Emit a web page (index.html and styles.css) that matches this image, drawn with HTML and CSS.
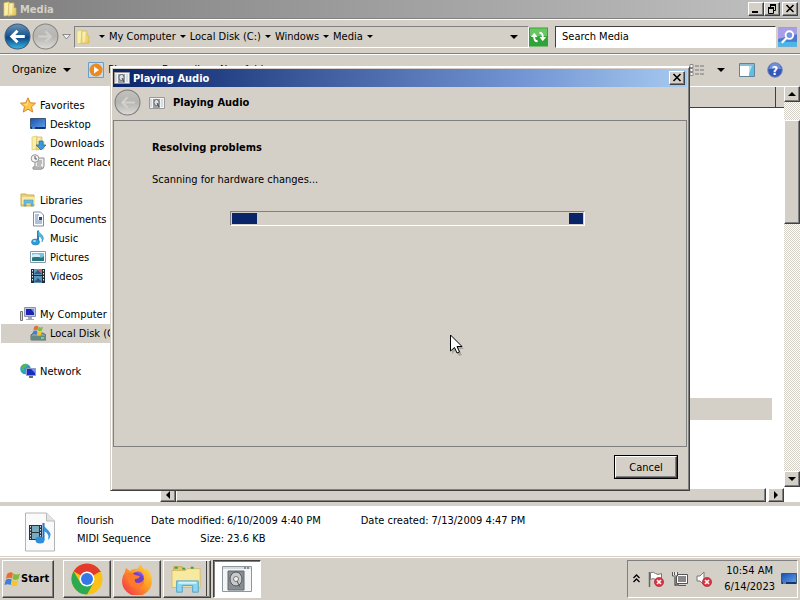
FILE: index.html
```html
<!DOCTYPE html>
<html lang="en">
<head>
<meta charset="utf-8">
<title>Media</title>
<link rel="stylesheet" href="styles.css">
</head>
<body>
<svg class="defs" aria-hidden="true">
  <defs>
    <linearGradient id="blueBall" x1="0" y1="0" x2="0" y2="1"><stop offset="0" stop-color="#6d93b5"/><stop offset=".45" stop-color="#1c5a92"/><stop offset=".55" stop-color="#0e4683"/><stop offset="1" stop-color="#35b8ea"/></linearGradient>
    <linearGradient id="greyBall" x1="0" y1="0" x2="0" y2="1"><stop offset="0" stop-color="#c2c1be"/><stop offset=".5" stop-color="#b5b4b0"/><stop offset="1" stop-color="#dddcd8"/></linearGradient>
    <linearGradient id="gold" x1="0" y1="0" x2="1" y2="1"><stop offset="0" stop-color="#fbf3b4"/><stop offset="1" stop-color="#e3c557"/></linearGradient>
    <linearGradient id="screen" x1="0" y1="0" x2="1" y2="1"><stop offset="0" stop-color="#1b4fb0"/><stop offset="1" stop-color="#62a4ec"/></linearGradient>
    <linearGradient id="fox" x1="1" y1="0" x2="0" y2="1"><stop offset="0" stop-color="#ffe14a"/><stop offset=".45" stop-color="#ff9a25"/><stop offset="1" stop-color="#f0264e"/></linearGradient>
    <symbol id="folder" viewBox="0 0 16 16"><path d="M2 2l5-1v13l-5 1z" fill="#f8efac" stroke="#dfc766" stroke-width=".7"/><path d="M7 2h5v5h2v7l-8 1z" fill="url(#gold)" stroke="#d5b752" stroke-width=".7"/><path d="M9 3v10" stroke="#fff8cf"/></symbol>
    <symbol id="speakerbox" viewBox="0 0 16 14"><path d="M.5 1.500h15v11H.5z" fill="#f4f4f4" stroke="#999"/><path d="M4 3h7v9H4z" fill="#9ba1a8"/><ellipse cx="7.500" cy="6.500" rx="2.500" ry="3" fill="#dfe3e7" stroke="#555" stroke-width=".8"/><path d="M8 7l2 4" stroke="#444"/><path d="M2 3v8M13 3v8" stroke="#b7c2d0"/></symbol>
    <symbol id="badge" viewBox="0 0 10 10"><circle cx="5" cy="5" r="4.600" fill="#d8333e" stroke="#a91f2b" stroke-width=".6"/><path d="M3 3l4 4M7 3L3 7" stroke="#fff" stroke-width="1.600"/></symbol>
    <symbol id="flag4" viewBox="0 0 16 16"><path d="M3 3q3-3 6-1L8 7.500Q5 6 2 8z" fill="#ef6a2e"/><path d="M9.500 2.500q3 2 6.500 0l-1.500 5.500q-3 2-6 0z" fill="#7ebc3c"/><path d="M1.700 9q3-2 6-.5l-1 5.500Q4 12.500.5 14z" fill="#3c80d8"/><path d="M8.300 9q3 2 6 0L13 14.500q-3 1.500-6 0z" fill="#f6c52d"/></symbol>
    <symbol id="monitor" viewBox="0 0 16 16"><path d="M.5 2.500h15v10H.5z" fill="url(#screen)" stroke="#385777"/><path d="M1 11h14v2H1z" fill="#163568"/><path d="M2 12h3" stroke="#8fd0ff"/></symbol>
    <symbol id="pc" viewBox="0 0 16 16"><path d="M.5 5.500h2v9h-2z" fill="#d9d9d9" stroke="#777"/><path d="M4.500 1.500h11v9h-11z" fill="#bfc8e4" stroke="#8b94ad"/><path d="M6 3h8v6H6z" fill="#1c22b4"/><path d="M11 3h3v4z" fill="#6d8bf1"/><path d="M8 11h4v2h2v1H6v-1h2z" fill="#a4a9b4"/></symbol>
  </defs>
</svg>

<main class="window">
  <header class="titlebar">
    <svg class="i16"><use href="#folder"/></svg>
    <h1>Media</h1>
    <div class="caption-buttons">
      <button class="bevel cap" aria-label="Minimize"><svg viewBox="0 0 12 10"><path d="M2 8h6" stroke="#000" stroke-width="2"/></svg></button>
      <button class="bevel cap" aria-label="Restore"><svg viewBox="0 0 12 10"><path d="M4 1h6M2 4h6" stroke="#000" stroke-width="2"/><path d="M4.500 1v2M9.500 1v5.500H8M2.500 4v5.500h5V4" fill="none" stroke="#000"/></svg></button>
      <button class="bevel cap close" aria-label="Close"><svg viewBox="0 0 12 10"><path d="M2.500 1l7 7M9.500 1l-7 7" stroke="#000" stroke-width="1.600"/></svg></button>
    </div>
  </header>

  <nav class="navbar" aria-label="Address">
    <button class="plain" aria-label="Back"><svg class="ball" viewBox="0 0 26 26"><circle cx="13" cy="13" r="12" fill="url(#blueBall)" stroke="#3c5c7c"/><path d="M20 13H8M13 7.500L7.500 13l5.500 5.500" fill="none" stroke="#fff" stroke-width="2.800"/></svg></button>
    <button class="plain" aria-label="Forward"><svg class="ball" viewBox="0 0 26 26"><circle cx="13" cy="13" r="12" fill="url(#greyBall)" stroke="#858582"/><path d="M6 13h12M13 8l5 5-5 5" fill="none" stroke="#cecdca" stroke-width="2.400"/></svg></button>
    <button class="plain recent" aria-label="Recent pages"><svg viewBox="0 0 9 6"><path d="M.7.5h7.600L4.500 5z" fill="#eee" stroke="#777" stroke-width=".8"/></svg></button>
    <div class="address">
      <svg class="i16"><use href="#folder"/></svg>
      <i class="down"></i><a href="#">My Computer</a>
      <i class="down"></i><a href="#">Local Disk (C:)</a>
      <i class="down"></i><a href="#">Windows</a>
      <i class="down"></i><a href="#">Media</a><i class="down"></i>
      <i class="down big last"></i>
    </div>
    <button class="plain refresh" aria-label="Refresh"><svg viewBox="0 0 20 20"><path d="M0 0h20v20H0z" fill="#2fa436"/><path d="M1 1h18v8H1z" fill="#69c662"/><path d="M9 14.500Q5.500 14.500 5.500 10M11 5.500q3.500 0 3.500 4.500" fill="none" stroke="#fff" stroke-width="2"/><path d="M2 10l3.500-4.500L9 10zM11 10l3.500 4.500L18 10z" fill="#fff"/></svg></button>
    <input class="search" type="text" aria-label="Search Media" value="Search Media">
    <button class="plain go" aria-label="Search"><svg viewBox="0 0 20 20"><path d="M0 0h20v20H0z" fill="#4a76d6"/><path d="M0 0h20v7L0 12z" fill="#a79ee6"/><path d="M0 15h20v5H0z" fill="#46b9e6"/><circle cx="12" cy="8" r="4" fill="#7593e4" stroke="#fff" stroke-width="2"/><path d="M9 11l-5 5" stroke="#fff" stroke-width="2.400"/></svg></button>
  </nav>

  <div class="toolbar">
    <button class="plain organize">Organize <i class="down big"></i></button>
    <button class="plain play"><svg class="i16" viewBox="0 0 16 16"><path d="M.5.5h15v15H.5z" fill="#bfdcf2" stroke="#6b9fc8"/><circle cx="8" cy="8" r="6.500" fill="#ee8a1d"/><path d="M6 4.500l5 3.500-5 3.500z" fill="#fff"/></svg>Play</button>
    <button class="plain">Burn all</button>
    <button class="plain">New folder</button>
    <div class="views">
      <button class="plain" aria-label="Change view"><svg class="v" viewBox="0 0 16 14"><path d="M1 1.500h3v3H1zM1 5.500h3v3H1zM1 9.500h3v3H1z" fill="#fff" stroke="#888"/><path d="M6 3h4M11 3h4M6 7h4M11 7h4M6 11h4M11 11h4" stroke="#777"/></svg></button>
      <button class="plain" aria-label="More view options"><i class="down big"></i></button>
      <button class="plain" aria-label="Preview pane"><svg class="i16" viewBox="0 0 16 14"><path d="M.5.5h15v13H.5z" fill="#fff" stroke="#60839b"/><path d="M1 1h14v2H1z" fill="#8dbbd1"/><path d="M10 3h5v10h-5z" fill="#62bdde"/><path d="M10 3l3 0-3 8z" fill="#b2e3f2"/></svg></button>
      <button class="plain" aria-label="Help"><svg class="i16" viewBox="0 0 16 16"><circle cx="8" cy="8" r="7.300" fill="#3157bd" stroke="#7b8cb8"/><path d="M2 7a6 6 0 0112 0z" fill="#718fd9"/><text x="8" y="12.500" text-anchor="middle" class="qm">?</text></svg></button>
    </div>
  </div>

  <section class="content">
    <aside class="sidebar">
      <ul>
        <li><svg class="i16" viewBox="0 0 16 16"><path d="M8 .8l2.200 5 5.300.4-4 3.500 1.200 5.300L8 12.200 3.300 15l1.200-5.300-4-3.500 5.300-.4z" fill="#fbc94a" stroke="#dd8326"/><path d="M8 3v4l-4 .5 3 1z" fill="#fff0a5"/></svg>Favorites
          <ul>
            <li><svg class="i16"><use href="#monitor"/></svg>Desktop</li>
            <li><svg class="i16" viewBox="0 0 16 16"><use href="#folder"/><path d="M9 6h4v4h3l-5 5-5-5h3z" fill="#3c98e0" stroke="#1b67ac" stroke-width=".7"/></svg>Downloads</li>
            <li><svg class="i16" viewBox="0 0 16 16"><path d="M5 4h9v8q0 3-3 3H3q2-1 2-4z" fill="#eee" stroke="#8c8c8c"/><path d="M7 7h5M7 9h5M7 11h4" stroke="#888"/><path d="M3 13h9v2H3z" fill="#c8c8c8" stroke="#999"/><circle cx="5" cy="4.500" r="3.800" fill="#f5f5f5" stroke="#8e969c"/><path d="M5 2v3h2" fill="none" stroke="#555"/></svg>Recent Places</li>
          </ul>
        </li>
        <li><svg class="i16" viewBox="0 0 16 16"><path d="M1 2h5l1 1h7v11H1z" fill="#ead27a" stroke="#cbae50"/><path d="M2 5h13v7H2z" fill="#f7eaa6"/><path d="M4 8h9v6h-2v-3H6v3H4z" fill="#6abbe2" stroke="#4a94b8" stroke-width=".6"/></svg>Libraries
          <ul>
            <li><svg class="i16" viewBox="0 0 16 16"><path d="M3.500 1h7l3 3v11h-10z" fill="#fdfdff" stroke="#7e8ba5"/><path d="M5 4h4M5 6h3M5 8h3M5 10h7M5 12h7" stroke="#6281b5"/><path d="M9 6h3v3H9z" fill="#26477c"/></svg>Documents</li>
            <li><svg class="i16" viewBox="0 0 16 16"><path d="M8 1v11" stroke="#2a7fb7" stroke-width="2"/><path d="M8 0q1 3 4 5 3 3 0 7 1-5-4-6z" fill="#55b7e1" stroke="#2a83b8" stroke-width=".5"/><ellipse cx="5.500" cy="12" rx="4" ry="3" fill="#329bd5" stroke="#1b6ea8" stroke-width=".6"/><ellipse cx="4.500" cy="11" rx="1.500" ry="1" fill="#a5def5"/></svg>Music</li>
            <li><svg class="i16" viewBox="0 0 16 16"><path d="M.5 2.500h15v11H.5z" fill="#fff" stroke="#8399ae"/><path d="M2 4h12v8H2z" fill="#78c2e7"/><path d="M2 9q4-3 7-1t5-1v5H2z" fill="#287779"/><path d="M2 6q4-2 8 0v2L2 8z" fill="#d3eef8"/></svg>Pictures</li>
            <li><svg class="i16" viewBox="0 0 16 16"><path d="M1 1h14v14H1z" fill="#222c35"/><path d="M4 1h8v6H4zM4 8h8v7H4z" fill="#5995bc"/><path d="M4 6l4-4 4 4zM4 14l4-4 4 4z" fill="#36597b"/><path d="M8 2h3v3z" fill="#c26664"/><path d="M2.500 2v12M13.500 2v12" stroke="#e8eef2" stroke-dasharray="1.500 1.500"/></svg>Videos</li>
          </ul>
        </li>
        <li><svg class="i16"><use href="#pc"/></svg>My Computer
          <ul>
            <li class="selected"><svg class="i16" viewBox="0 0 16 16"><path d="M1 10l2-2h10l3 2v5H1z" fill="#8c9ba0" stroke="#596e74"/><path d="M1 11h14v4H1z" fill="#638b83"/><path d="M11 13h3" stroke="#72ef7c" stroke-width="1.500"/><svg x="2" y="0" width="11" height="11"><use href="#flag4"/></svg></svg>Local Disk (C:)</li>
          </ul>
        </li>
        <li><svg class="i16" viewBox="0 0 16 16"><circle cx="5.500" cy="6" r="5.300" fill="#2b9fc6"/><path d="M2 3q2-3 5-2l-1 3-2 1v3L1 7zM5 7l3 2-2 2z" fill="#53b956"/><path d="M6.500 5.500h9v7h-9z" fill="#1b2dbb" stroke="#8f9dcb"/><path d="M11 6h4v4z" fill="#7195ec"/><path d="M9 13h4v2H9z" fill="#667"/></svg>Network</li>
      </ul>
    </aside>
    <div class="files">
      <div class="column-head"><span></span></div>
      <div class="rows"><div class="row-selected"></div></div>
      <div class="hscroll">
        <button class="bevel arrow" aria-label="Scroll left"><i class="tri left"></i></button>
        <div class="bevel hthumb"></div>
        <button class="bevel arrow" aria-label="Scroll right"><i class="tri right"></i></button>
      </div>
    </div>
    <div class="vscroll">
      <button class="bevel arrow" aria-label="Scroll up"><i class="tri up"></i></button>
      <div class="bevel vthumb"></div>
      <button class="bevel arrow" aria-label="Scroll down"><i class="tri dn"></i></button>
    </div>
  </section>

  <section class="details">
    <svg class="file" viewBox="0 0 32 40"><path d="M1.500 1h21l8 8v30h-29z" fill="#fafafa" stroke="#b4b4b4"/><path d="M22.500 1v8h8" fill="#e3e3e3" stroke="#bbb"/><path d="M5 13h13v15H5z" fill="#27323a"/><path d="M8 14h7v6H8zM8 21h7v6H8z" fill="#78aabd"/><path d="M6.500 14v13M16.500 14v13" stroke="#dde" stroke-dasharray="1.500 1.500"/><path d="M19.500 11v17" stroke="#2371ba" stroke-width="2"/><path d="M19 11q1 4 5 7 5 5 0 10 2-6-4-9z" fill="#3894dc"/><ellipse cx="16" cy="28" rx="4.500" ry="3.500" fill="#2f8cd9"/></svg>
    <div class="name"><span>flourish</span><span>MIDI Sequence</span></div>
    <dl class="facts"><dt>Date modified:</dt><dd>6/10/2009 4:40 PM</dd><dt>Size:</dt><dd>23.6 KB</dd></dl>
    <dl class="facts created"><dt>Date created:</dt><dd>7/13/2009 4:47 PM</dd></dl>
  </section>
</main>

<footer class="taskbar">
  <button class="bevel start"><svg viewBox="0 0 16 16"><use href="#flag4"/></svg>Start</button>
  <button class="bevel task" aria-label="Google Chrome"><svg viewBox="0 0 32 32"><circle cx="16" cy="16" r="15.500" fill="#fbc116"/><path d="M16 16L2.600 8.200A15.500 15.500 0 0129.400 8.200z" fill="#e33b2e"/><path d="M2.600 8.200A15.500 15.500 0 0016 31.500L22.500 20 16 23 9.500 20z" fill="#2da94f"/><path d="M16 8.500h13.500" stroke="#e33b2e" stroke-width="1"/><circle cx="16" cy="16" r="7.500" fill="#fff"/><circle cx="16" cy="16" r="6" fill="#3478e8"/></svg></button>
  <button class="bevel task" aria-label="Firefox"><svg viewBox="0 0 32 32"><path d="M4 9l1-4 4 3q3-3 7-2l4-5q1 4 4 6l1-2q6 5 6 13a14.500 14.500 0 01-30 0Q1 13 4 9z" fill="url(#fox)"/><circle cx="16" cy="16" r="7" fill="#7041c5"/><path d="M6 11q4-3 8 1l5 1q-1 3-5 3-1 4 3 4 4 0 6-4 1 8-7 9-10-1-10-14z" fill="#ff7a2c"/><path d="M14 9q7-2 9 5l-3-2q-3-2-6-3z" fill="#9059dd"/></svg></button>
  <button class="bevel task stacked" aria-label="Windows Explorer"><svg viewBox="0 0 34 32"><path d="M3 3h9l2 3h15v19H3z" fill="#e4c866" stroke="#c6a94c"/><path d="M1 7h14l2-2h14v20H1z" fill="#f8e9a0" stroke="#d4bb69"/><path d="M4 4h3M12 5h3M21 4h3" stroke="#3a9a4e" stroke-width="2"/><path d="M6 18h23v12h-6v-7H12v7H6z" fill="#8ed5ef" stroke="#4ba4cd"/><path d="M8 20h19" stroke="#d6f4ff" stroke-width="2"/></svg></button>
  <button class="task pressed" aria-label="Playing Audio"><svg viewBox="0 0 32 28"><path d="M1.500 1.500h29v25h-29z" fill="#f3f5f7" stroke="#8f979e"/><path d="M2 2h28v2H2z" fill="#d4dade"/><path d="M23 3h2M26 3h2" stroke="#444"/><path d="M7 6h16v19H7z" fill="#868d93" stroke="#62686e"/><ellipse cx="15" cy="14" rx="6" ry="7" fill="#c6cacd" stroke="#555"/><circle cx="15" cy="14" r="2.500" fill="#f2f2f2" stroke="#777"/><path d="M16 16l3 6" stroke="#555"/></svg></button>
  <div class="tray">
    <button class="plain" aria-label="Show hidden icons"><svg class="chev" viewBox="0 0 7 9"><path d="M.5 4l3-3 3 3M.5 8l3-3 3 3" fill="none" stroke="#000" stroke-width="1.300"/></svg></button>
    <svg class="i16" viewBox="0 0 16 16"><path d="M1.500 1v15" stroke="#666" stroke-width="1.500"/><path d="M2.500 1.500q3-1 5 1t6 0v6q-4 2-6 0t-5 0z" fill="#fff" stroke="#777"/><use href="#badge" x="6" y="6" width="10" height="10"/></svg>
    <svg class="i16" viewBox="0 0 16 16"><path d="M4.500 3.500h11v9h-11z" fill="#fff" stroke="#555"/><path d="M6 5h8v6H6z" fill="#888"/><path d="M7 14.500h7" stroke="#555"/><path d="M3 6v8h4" fill="none" stroke="#555" stroke-width="1.300"/><path d="M.5 1v4h5V1M2.500 1v3" fill="#eee" stroke="#555"/></svg>
    <svg class="i16" viewBox="0 0 16 16"><path d="M1 5h3l4-4v13L4 10H1z" fill="#fff" stroke="#777"/><use href="#badge" x="6" y="6" width="10" height="10"/></svg>
    <time class="clock"><span>10:54 AM</span><span>6/14/2023</span></time>
    <button class="plain show" aria-label="Show desktop"><svg class="i16"><use href="#monitor"/></svg></button>
  </div>
</footer>

<section class="dialog" role="dialog" aria-labelledby="dialog-title">
  <header class="dialog-title">
    <svg class="i16"><use href="#speakerbox"/></svg>
    <h2 id="dialog-title">Playing Audio</h2>
    <button class="bevel cap" aria-label="Close dialog"><svg viewBox="0 0 12 10"><path d="M2.500 1l7 7M9.500 1l-7 7" stroke="#000" stroke-width="1.600"/></svg></button>
  </header>
  <div class="dialog-head">
    <button class="plain" aria-label="Previous step"><svg class="ball" viewBox="0 0 26 26"><circle cx="13" cy="13" r="12" fill="url(#greyBall)" stroke="#7c7c7a"/><path d="M20 13H8M13 8l-5 5 5 5" fill="none" stroke="#d2d1ce" stroke-width="2"/></svg></button>
    <svg class="i16"><use href="#speakerbox"/></svg>
    <h3>Playing Audio</h3>
  </div>
  <div class="dialog-body">
    <h3>Resolving problems</h3>
    <p>Scanning for hardware changes...</p>
    <div class="progress" role="progressbar" aria-label="Scanning"><i class="chunk"></i><i class="chunk end"></i></div>
  </div>
  <div class="dialog-foot"><button class="bevel cancel">Cancel</button></div>
</section>

<svg class="cursor" viewBox="0 0 14 22"><path d="M2 4v16l4-4 3 6 3-1-3-6h5z" fill="#0003"/><path d="M.5 1v16l4-3.500L7 19l2.500-1L7 12.500h5z" fill="#fff" stroke="#000"/></svg>
</body>
</html>
```
FILE: styles.css
```css
* { box-sizing: border-box; }

:root {
  --face: #d4d0c8;
  --shade: #808080;
  --dark: #404040;
}

body {
  margin: 0;
  height: 100vh;
  display: flex;
  flex-direction: column;
  overflow: hidden;
  position: relative;
  background: var(--face);
  color: #000;
  font: 11px/19px "DejaVu Sans Condensed", "Noto Sans", sans-serif;
}

h1, h2, h3, p, ul, dl, dd { margin: 0; padding: 0; font-size: inherit; }
ul { list-style: none; }
a { color: inherit; text-decoration: none; }
button, input { font: inherit; color: inherit; margin: 0; padding: 0; border-radius: 0; }
svg { display: block; flex: none; }
.defs { position: absolute; width: 0; height: 0; }
.i16 { width: 16px; height: 16px; }
.ball { width: 27px; height: 27px; }
.plain { display: flex; align-items: center; border: 0; background: none; }

.bevel {
  border: 1px solid;
  border-color: #fff var(--dark) var(--dark) #fff;
  box-shadow: inset -1px -1px var(--shade);
  background: var(--face);
}

.down {
  flex: none;
  border: 3px solid transparent;
  border-top-color: #000;
  border-bottom: 0;
}
.down.big { border-width: 4px 4px 0; }

.window { flex: 1; min-height: 0; display: flex; flex-direction: column; }

.titlebar {
  display: flex;
  align-items: center;
  gap: 2px;
  height: 18px;
  padding: 0 2px;
  color: var(--face);
  background: linear-gradient(90deg, #808080, #c0c0c0);
}
.caption-buttons { display: flex; margin-left: auto; }
.cap {
  display: flex;
  align-items: center;
  justify-content: center;
  width: 16px;
  height: 14px;
}
.cap svg { width: 12px; height: 10px; }
.close { margin-left: 2px; }

.navbar {
  display: flex;
  align-items: center;
  height: 36px;
  padding: 1px 3px 0 4px;
  border-top: 1px solid var(--shade);
  border-bottom: 1px solid var(--shade);
  box-shadow: inset 0 1px #fff;
}
.navbar .plain { margin-right: 1px; }
.navbar .recent { margin: 0; padding: 0 3px 0 2px; }
.recent svg { width: 9px; height: 6px; }
.address {
  flex: 1;
  display: flex;
  align-items: center;
  gap: 4px;
  height: 22px;
  border: 1px solid;
  border-color: var(--shade) #fff #fff var(--shade);
}
.address .i16 { margin-right: 4px; }
.last { margin: 0 10px 0 auto; }
.navbar .refresh { margin: 0 7px 0 0; }
.refresh svg, .go svg { width: 19px; height: 20px; }
.search {
  width: 221px;
  height: 22px;
  padding: 0 6px;
  border: 1px solid;
  border-color: var(--dark) #fff #fff var(--dark);
  background: #fff;
}
.navbar .go { margin: 0 0 0 2px; }

.toolbar {
  display: flex;
  align-items: center;
  height: 32px;
  padding: 0 17px 2px 12px;
  border-top: 1px solid #fff;
}
.organize { gap: 7px; margin-right: 17px; }
.play { gap: 4px; margin-right: 33px; }
.toolbar > .plain + .plain + .plain { margin-right: 20px; }
.views { display: flex; align-items: center; gap: 12px; margin-left: auto; }
.views .v { width: 16px; height: 14px; }
.views .down { margin-right: 2px; }
.qm { font: bold 12px "DejaVu Sans Condensed", sans-serif; fill: #fff; }

.content { flex: 1; min-height: 0; display: flex; background: #fff; }
.sidebar { width: 160px; padding: 10px 3px 0 1px; overflow: hidden; }
.sidebar li { white-space: nowrap; }
.sidebar > ul > li { margin-bottom: 19px; }
.sidebar li .i16 { display: inline-block; vertical-align: middle; margin: -3px 4px 0 19px; }
.sidebar ul ul .i16 { margin-left: 29px; }
.sidebar .selected { background: var(--face); }

.files { flex: 1; display: flex; flex-direction: column; min-width: 0; }
.column-head {
  display: flex;
  height: 22px;
  padding-right: 8px;
  border-top: 1px solid #fff;
  border-bottom: 1px solid var(--dark);
  background: var(--face);
}
.column-head span { flex: 1; border-right: 1px solid var(--dark); }
.rows { flex: 1; display: flex; flex-direction: column; justify-content: flex-end; }
.row-selected { height: 22px; margin: 0 12px 68px 0; background: var(--face); }
.hscroll { display: flex; height: 14px; }
.hthumb { flex: 1; margin-right: 2px; }
.arrow { display: flex; align-items: center; justify-content: center; width: 16px; height: 16px; }
.hscroll .arrow { height: 14px; }
.tri { border: 4px solid transparent; }
.left { border-right-color: #000; border-left: 0; }
.right { border-left-color: #000; border-right: 0; }
.up { border-bottom-color: #000; border-top: 0; }
.dn { border-top-color: #000; border-bottom: 0; }
.vscroll {
  display: flex;
  flex-direction: column;
  width: 16px;
  margin-bottom: 15px;
  background: repeating-conic-gradient(#fff 0 25%, var(--face) 0 50%) 0 0 / 2px 2px;
}
.vthumb { height: 104px; margin: 18px 0 auto; }

.details {
  display: flex;
  align-items: flex-start;
  height: 55px;
  padding-top: 6px;
  border-top: 4px solid var(--face);
  border-bottom: 1px solid var(--face);
  background: #fff;
  line-height: 18px;
}
.file { width: 32px; height: 40px; margin: 0 21px 0 24px; }
.name { display: flex; flex-direction: column; width: 74px; white-space: nowrap; }
.facts { display: grid; grid-template-columns: 73px auto; column-gap: 3px; white-space: nowrap; }
.facts dt { text-align: right; }
.created { grid-template-columns: auto auto; margin-left: 40px; }

.taskbar {
  display: flex;
  align-items: center;
  gap: 2px;
  height: 43px;
  padding: 1px 2px 2px;
  border-top: 1px solid #fff;
}
.start {
  display: flex;
  align-items: center;
  gap: 1px;
  width: 52px;
  height: 38px;
  margin-right: 7px;
  padding: 0 1px;
  font-weight: bold;
}
.start svg { width: 16px; height: 16px; }
.task { display: flex; align-items: center; justify-content: center; width: 48px; height: 38px; }
.task svg { width: 32px; height: 32px; }
.stacked { box-shadow: inset -1px -1px var(--shade), inset -3px 0 var(--face), inset -4px 0 var(--dark); }
.pressed {
  border: 1px solid;
  border-color: var(--dark) #fff #fff var(--dark);
  box-shadow: inset 1px 1px var(--shade);
  background: #fff;
}
.tray {
  display: flex;
  align-items: center;
  gap: 8px;
  height: 38px;
  margin-left: auto;
  padding: 0 0 0 5px;
  border: 1px solid;
  border-color: var(--shade) #fff #fff var(--shade);
}
.chev { width: 7px; height: 9px; }
.clock { display: flex; flex-direction: column; align-items: center; margin: 0 -2px 0 4px; line-height: 16px; }

.dialog {
  position: absolute;
  top: 66px;
  bottom: 109px;
  left: 110px;
  right: 110px;
  display: flex;
  flex-direction: column;
  padding: 2px;
  border: 1px solid;
  border-color: #fff var(--dark) var(--dark) var(--face);
  box-shadow: inset 1px 1px #fff, inset -1px -1px var(--shade);
  background: var(--face);
}
.dialog-title {
  display: flex;
  align-items: center;
  gap: 3px;
  height: 18px;
  padding: 0 2px 0 1px;
  color: #fff;
  background: linear-gradient(90deg, #0a246a, #7496d4 72%, #a6caf0);
}
.dialog-title .cap { margin-left: auto; }
.dialog-title .i16, .dialog-head .i16 { height: 14px; }
.dialog-head { display: flex; align-items: center; height: 33px; gap: 8px; padding: 0 1px 2px; }
.dialog-body {
  flex: 1;
  padding: 17px 38px;
  border: 1px solid var(--shade);
}
.dialog-body p { margin-top: 13px; }
.progress {
  display: flex;
  justify-content: space-between;
  height: 15px;
  margin: 22px 63px 0 78px;
  padding: 1px;
  border: 1px solid;
  border-color: var(--shade) #fff #fff var(--shade);
}
.chunk { width: 25px; background: #0a246a; }
.chunk.end { width: 14px; }
.dialog-foot { display: flex; justify-content: flex-end; padding: 8px 9px 9px; }
.cancel { width: 64px; height: 24px; outline: 1px solid #000; outline-offset: -1px; border-width: 2px; }

.cursor { position: absolute; left: 450px; top: 334px; width: 14px; height: 22px; }
```
